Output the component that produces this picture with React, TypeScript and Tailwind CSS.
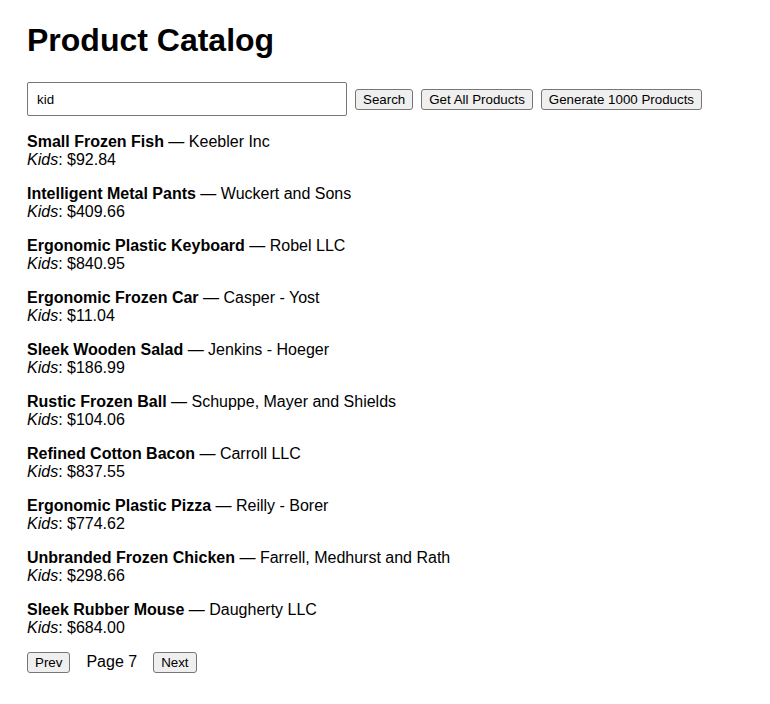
import React, { useState } from "react";

type Product = { name: string; company: string; category: string; price: string };

const products: Product[] = [
  { name: "Small Frozen Fish", company: "Keebler Inc", category: "Kids", price: "92.84" },
  { name: "Intelligent Metal Pants", company: "Wuckert and Sons", category: "Kids", price: "409.66" },
  { name: "Ergonomic Plastic Keyboard", company: "Robel LLC", category: "Kids", price: "840.95" },
  { name: "Ergonomic Frozen Car", company: "Casper - Yost", category: "Kids", price: "11.04" },
  { name: "Sleek Wooden Salad", company: "Jenkins - Hoeger", category: "Kids", price: "186.99" },
  { name: "Rustic Frozen Ball", company: "Schuppe, Mayer and Shields", category: "Kids", price: "104.06" },
  { name: "Refined Cotton Bacon", company: "Carroll LLC", category: "Kids", price: "837.55" },
  { name: "Ergonomic Plastic Pizza", company: "Reilly - Borer", category: "Kids", price: "774.62" },
  { name: "Unbranded Frozen Chicken", company: "Farrell, Medhurst and Rath", category: "Kids", price: "298.66" },
  { name: "Sleek Rubber Mouse", company: "Daugherty LLC", category: "Kids", price: "684.00" },
];

const btn =
  "h-[21px] px-[7px] text-[13.33px] leading-[15px] bg-[#efefef] border border-[#767676] rounded-[3px] text-black";

export default function App() {
  const [query, setQuery] = useState("kid");

  return (
    <div className="min-h-[704px] bg-white text-black px-[27px] pt-[22px] font-['Liberation_Sans',Arial,sans-serif]">
      <h1 className="text-[32px] leading-[37px] font-bold">Product Catalog</h1>

      {/* Search bar */}
      <div className="flex items-center gap-[8px] mt-[23px]">
        <input
          value={query}
          onChange={(e) => setQuery(e.target.value)}
          className="w-[320px] h-[34px] px-[9px] text-[13.33px] border border-[#767676] rounded-[2px] outline-none"
        />
        <button className={btn}>Search</button>
        <button className={btn}>Get All Products</button>
        <button className={btn}>Generate 1000 Products</button>
      </div>

      {/* Results */}
      <div className="mt-[17px] flex flex-col gap-[16px]">
        {products.map((p) => (
          <div key={p.name} className="text-[16px] leading-[18px]">
            <div>
              <strong>{p.name}</strong> — {p.company}
            </div>
            <div>
              <em>{p.category}</em>: ${p.price}
            </div>
          </div>
        ))}
      </div>

      {/* Pagination */}
      <div className="flex items-center text-[16px] mt-[13px]">
        <button className={btn}>Prev</button>
        <span className="ml-[16px] mr-[16px]">Page 7</span>
        <button className={btn}>Next</button>
      </div>
    </div>
  );
}
